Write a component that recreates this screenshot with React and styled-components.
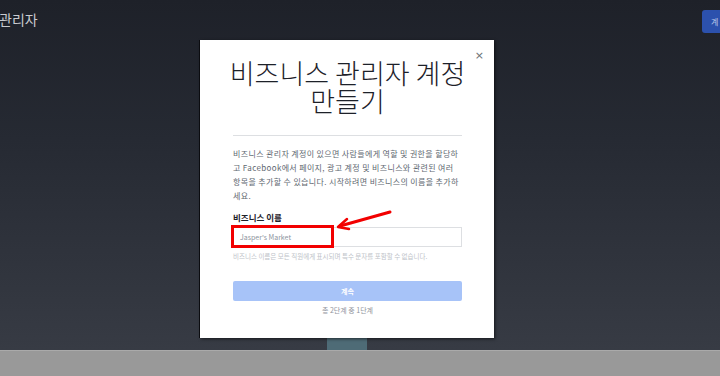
import React from 'react'
import styled, { createGlobalStyle } from 'styled-components'

const Global = createGlobalStyle`
  html, body { margin: 0; padding: 0; }
  body {
    font-family: "Noto Sans CJK KR", "Noto Sans", "Liberation Sans", sans-serif;
    background: #999;
  }
`

const Page = styled.div`
  width: 720px;
  height: 376px;
  display: flex;
  flex-direction: column;
  overflow: hidden;
`

const Stage = styled.div`
  height: 350px;
  display: flex;
  flex-direction: column;
  background: linear-gradient(180deg, #1e2129 0%, #262a33 40%, #373b44 100%);
  overflow: hidden;
`

const TopBar = styled.div`
  height: 40px;
  display: flex;
  align-items: flex-start;
  justify-content: space-between;
`

const Brand = styled.div`
  margin-top: 9px;
  margin-left: -1px;
  font-size: 14px;
  line-height: 20px;
  color: #c9cbd0;
`

const CreateButton = styled.div`
  margin-top: 10px;
  margin-right: -22px;
  width: 40px;
  height: 23px;
  border-radius: 3px;
  background: #2c51ad;
  color: #b9c6e8;
  font-size: 8px;
  line-height: 23px;
  padding-left: 9px;
  box-sizing: border-box;
`

const Modal = styled.div`
  position: relative;
  margin-left: 200px;
  width: 294px;
  height: 298px;
  flex-shrink: 0;
  box-sizing: border-box;
  background: #fff;
  padding: 0 32px 0 33px;
  display: flex;
  flex-direction: column;
  box-shadow: -1px 0 0 #0b0c10, 1px 1px 3px rgba(0, 0, 0, 0.6);
`

const Close = styled.button`
  position: absolute;
  top: 10px;
  right: 10px;
  border: 0;
  background: none;
  padding: 0;
  font-size: 11px;
  line-height: 12px;
  color: #6b6f76;
  font-family: "DejaVu Sans", sans-serif;
`

const Title = styled.h1`
  margin: 19px -10px 0;
  font-size: 27px;
  line-height: 28px;
  font-weight: 300;
  text-align: center;
  color: #1d2129;
  white-space: nowrap;
`

const Divider = styled.hr`
  margin: 20px 0 0;
  border: 0;
  border-top: 1px solid #dddfe2;
`

const Body = styled.p`
  margin: 11px 0 0;
  font-size: 8px;
  line-height: 14px;
  letter-spacing: 0.35px;
  color: #606770;
`

const Label = styled.div`
  margin-top: 8px;
  font-size: 8.5px;
  line-height: 12px;
  font-weight: 700;
  color: #1d2129;
`

const Field = styled.div`
  position: relative;
  margin-top: 4px;
  height: 20px;
  border: 1px solid #dddfe2;
  box-sizing: border-box;
  display: flex;
  align-items: center;
  padding-left: 6px;
  font-size: 7px;
  color: #8d949e;
`

const Highlight = styled.div`
  position: absolute;
  left: -3px;
  top: -3px;
  width: 103px;
  height: 23px;
  border: 3px solid #f20000;
  box-sizing: border-box;
`

const Arrow = styled.svg`
  position: absolute;
  left: 100px;
  top: -20px;
  overflow: visible;
`

const Hint = styled.div`
  margin-top: 4px;
  font-size: 6.5px;
  line-height: 10px;
  color: #bec3c9;
  white-space: nowrap;
`

const Continue = styled.button`
  margin-top: 20px;
  height: 20px;
  border: 0;
  border-radius: 2px;
  background: #a7c3f8;
  color: #fff;
  font-family: inherit;
  font-size: 7px;
  font-weight: 700;
`

const Steps = styled.div`
  margin-top: 4px;
  text-align: center;
  font-size: 7px;
  line-height: 10px;
  color: #90949c;
`

const Peek = styled.div`
  margin-left: 327px;
  width: 40px;
  height: 12px;
  flex-shrink: 0;
  background: #4e6b76;
`

const Footer = styled.div`
  height: 26px;
  background: #999;
  border-top: 1px solid #aaa;
  box-sizing: border-box;
`

export default function App() {
  return (
    <Page>
      <Global />
      <Stage>
        <TopBar>
          <Brand>관리자</Brand>
          <CreateButton>계</CreateButton>
        </TopBar>
        <Modal>
          <Close>×</Close>
          <Title>비즈니스 관리자 계정<br />만들기</Title>
          <Divider />
          <Body>
            비즈니스 관리자 계정이 있으면 사람들에게 역할 및 권한을 할당하고 Facebook에서 페이지, 광고 계정 및 비즈니스와 관련된 여러 항목을 추가할 수 있습니다. 시작하려면 비즈니스의 이름을 추가하세요.
          </Body>
          <Label>비즈니스 이름</Label>
          <Field>
            Jasper's Market
            <Highlight />
            <Arrow width="60" height="30" viewBox="0 0 60 30">
              <path d="M56 4 L6 18" stroke="#f20000" strokeWidth="3" strokeLinecap="round" fill="none" />
              <path d="M13 11 L4 19 L15 21" stroke="#f20000" strokeWidth="2.5" strokeLinecap="round" strokeLinejoin="round" fill="none" />
            </Arrow>
          </Field>
          <Hint>비즈니스 이름은 모든 직원에게 표시되며 특수 문자를 포함할 수 없습니다.</Hint>
          <Continue>계속</Continue>
          <Steps>총 2단계 중 1단계</Steps>
        </Modal>
        <Peek />
      </Stage>
      <Footer />
    </Page>
  )
}
